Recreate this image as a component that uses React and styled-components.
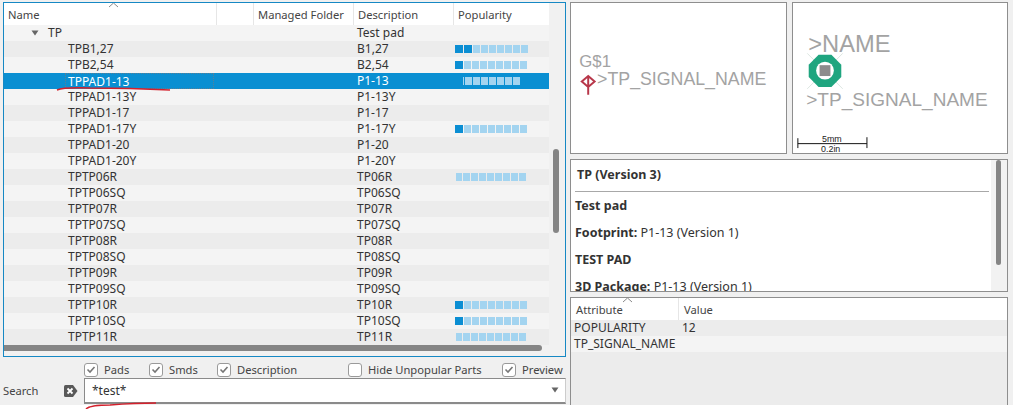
import React from "react"
import styled, { createGlobalStyle } from "styled-components"

const Global = createGlobalStyle`
  html, body { margin: 0; padding: 0; background: #fff; }
  body { font-family: "Noto Sans", Tahoma, sans-serif; font-size: 12px; color: #333; }
  * { box-sizing: border-box; }
`

const Window = styled.div`
  position: relative;
  width: 1013px;
  height: 409px;
  overflow: hidden;
`

const Layout = styled.div`
  display: grid;
  grid-template-columns: 570px 1fr;
  height: 405px;
  background: #f0f0f0;
  padding-top: 2px;
`

const LeftPane = styled.div`
  display: flex;
  flex-direction: column;
  padding: 0 4px 0 3px;
`

const RightPane = styled.div`
  display: flex;
  flex-direction: column;
  gap: 5px;
  padding-right: 5px;
`

const ListBox = styled.div`
  position: relative;
  height: 355px;
  flex: none;
  border: 1px solid #1688c4;
  overflow: hidden;
  background: #f1f1f1;
`

const HeaderRow = styled.div`
  display: grid;
  grid-template-columns: ${(p) => p.$columns};
  height: 22px;
  width: ${(p) => p.$width};
  background: #fff;
`

const HeaderCell = styled.div`
  position: relative;
  display: flex;
  align-items: center;
  padding-left: ${(p) => p.$pad || 4}px;
  border-right: 1px solid #e6e6e6;
  font-size: 11.2px;
  white-space: nowrap;
  color: #444;
  &:last-child { border-right: none; }
`

const SortArrow = styled.svg`
  position: absolute;
  top: -1px;
  left: ${(p) => p.$left}px;
`

const Row = styled.div`
  display: grid;
  grid-template-columns: 213px 37px 100px 100px 95px;
  width: 545px;
  height: 16px;
  align-items: center;
  white-space: nowrap;
  background: ${(p) => (p.$selected ? "#0a8fd2" : p.$odd ? "#ececec" : "#f4f4f4")};
  color: ${(p) => (p.$selected ? "#fff" : "#333")};
`

const NameCell = styled.div`
  height: 16px;
  line-height: 16px;
  padding-left: ${(p) => p.$indent}px;
  display: flex;
  align-items: center;
`

const FocusBox = styled.div`
  width: 100%;
  height: 16px;
  line-height: 15px;
  margin-left: -3px;
  border: ${(p) => (p.$focus ? "1px dotted #5a7f96" : "none")};
  padding-left: ${(p) => (p.$focus ? 2 : 3)}px;
`

const TreeArrow = styled.svg`
  margin-right: 9px;
  margin-left: -17px;
  flex: none;
`

const DescCell = styled.div`
  padding-left: 3px;
  line-height: 16px;
`

const Bar = styled.div`
  display: flex;
  gap: 1px;
  padding-left: ${(p) => p.$pad}px;
`

const BarCell = styled.div`
  width: ${(p) => p.$w}px;
  height: 8px;
  background: ${(p) => (p.$on ? "#0b8ed3" : "#a3d4f0")};
`

const VScroll = styled.div`
  position: absolute;
  right: 6px;
  top: ${(p) => p.$top}px;
  width: ${(p) => p.$w || 6}px;
  height: ${(p) => p.$h}px;
  border-radius: 3px;
  background: #858585;
`

const HScroll = styled.div`
  position: absolute;
  left: 0;
  bottom: 5px;
  width: 538px;
  height: 6px;
  border-radius: 0 3px 3px 0;
  background: #858585;
`

const OptionsRow = styled.div`
  display: flex;
  align-items: center;
  height: 21px;
  padding: 4px 0 0 81px;
  white-space: nowrap;
  flex: none;
`

const Check = styled.label`
  display: flex;
  align-items: center;
  gap: 6px;
  width: ${(p) => p.$w}px;
  flex: none;
  font-size: 11.2px;
  color: #444;
`

const Box = styled.span`
  width: 14px;
  height: 14px;
  flex: none;
  border: 1px solid #9a9a9a;
  border-radius: 3px;
  background: #fff;
  display: flex;
  align-items: center;
  justify-content: center;
`

const SearchRow = styled.div`
  display: flex;
  align-items: center;
  height: 25px;
  flex: none;
`

const SearchLabel = styled.span`
  width: 60px;
  font-size: 11.2px;
  color: #444;
`

const ClearIcon = styled.svg`
  margin-right: 6px;
  flex: none;
`

const SearchInput = styled.div`
  flex: 1;
  height: 26px;
  border: 1px solid #8a8a8a;
  border-width: 1px 0 2px 1px;
  border-right: 1px solid #ccc;
  background: #fff;
  display: flex;
  align-items: center;
  justify-content: space-between;
  padding: 0 6px 0 7px;
  color: #333;
`

const Caret = styled.svg`
  flex: none;
`

const Previews = styled.div`
  display: grid;
  grid-template-columns: 217px 216px;
  gap: 5px;
  height: 152px;
  flex: none;
`

const Canvas = styled.svg`
  display: block;
  width: 100%;
  height: 100%;
  border: 1px solid #8e8e8e;
  background: #fff;
`

const PreviewText = styled.text`
  font-family: "Liberation Sans", Arial, sans-serif;
  fill: ${(p) => p.$fill || "#a3a3a3"};
  font-size: ${(p) => p.$size}px;
`

const InfoPanel = styled.div`
  position: relative;
  height: 133px;
  flex: none;
  border: 1px solid #8e8e8e;
  background: #fff;
  overflow: hidden;
  padding: 7px 0 0 4px;
  font-size: 12.5px;
  color: #333;
`

const InfoTitle = styled.div`
  font-weight: bold;
  padding: 0 0 9px 2px;
  line-height: 15px;
  margin-right: 18px;
  border-bottom: 1px solid #a8a8a8;
`

const InfoLine = styled.p`
  margin: 0;
  height: 27px;
  line-height: 27px;
  white-space: nowrap;
`

const InfoBold = styled.b`
  font-weight: bold;
`

const InfoTrack = styled.div`
  position: absolute;
  top: 0;
  right: 0;
  bottom: 0;
  width: 16px;
  background: #f2f2f2;
`

const AttrPanel = styled.div`
  flex: 1;
  border: 1px solid #8e8e8e;
  border-bottom: none;
  background: #ececec;
`

const AttrRow = styled.div`
  display: grid;
  grid-template-columns: 108px 1fr;
  height: 16px;
  line-height: 16px;
  padding-left: 3px;
  white-space: nowrap;
  background: ${(p) => (p.$odd ? "#ececec" : "#f4f4f4")};
`

const Marks = styled.svg`
  position: absolute;
  left: 0;
  top: 0;
  pointer-events: none;
`

const COLS = "213px 37px 100px 100px 95px"

const rows = [
  { name: "TPB1,27", desc: "B1,27", on: 2 },
  { name: "TPB2,54", desc: "B2,54", on: 1 },
  { name: "TPPAD1-13", desc: "P1-13", on: 0, selected: true },
  { name: "TPPAD1-13Y", desc: "P1-13Y" },
  { name: "TPPAD1-17", desc: "P1-17" },
  { name: "TPPAD1-17Y", desc: "P1-17Y", on: 1 },
  { name: "TPPAD1-20", desc: "P1-20" },
  { name: "TPPAD1-20Y", desc: "P1-20Y" },
  { name: "TPTP06R", desc: "TP06R", on: 0 },
  { name: "TPTP06SQ", desc: "TP06SQ" },
  { name: "TPTP07R", desc: "TP07R" },
  { name: "TPTP07SQ", desc: "TP07SQ" },
  { name: "TPTP08R", desc: "TP08R" },
  { name: "TPTP08SQ", desc: "TP08SQ" },
  { name: "TPTP09R", desc: "TP09R" },
  { name: "TPTP09SQ", desc: "TP09SQ" },
  { name: "TPTP10R", desc: "TP10R", on: 1 },
  { name: "TPTP10SQ", desc: "TP10SQ", on: 1 },
  { name: "TPTP11R", desc: "TP11R", on: 0 },
]

const Popularity = ({ on, selected }) => {
  const firstWidth = selected ? 1 : on === 0 ? 6 : 8
  return (
    <Bar $pad={selected ? 9 : on === 0 ? 2 : 1}>
      {Array.from({ length: selected ? 8 : 9 }).map((_, i) => (
        <BarCell key={i} $on={i < on} $w={i === 0 ? firstWidth : i < on ? 8 : 7} />
      ))}
    </Bar>
  )
}

const Arrow = ({ left }) => (
  <SortArrow $left={left} width="11" height="6" viewBox="0 0 11 6">
    <path d="M1 5 L5.5 1 L10 5" fill="none" stroke="#8a8a8a" strokeWidth="1" />
  </SortArrow>
)

const Tick = () => (
  <svg width="10" height="9" viewBox="0 0 10 9">
    <path d="M1.5 4.5 L4 7 L8.5 2" fill="none" stroke="#777" strokeWidth="1.6" />
  </svg>
)

const Option = ({ w, checked, children }) => (
  <Check $w={w}>
    <Box>{checked && <Tick />}</Box>
    {children}
  </Check>
)

const App = () => (
  <Window>
    <Global />
    <Layout>
      <LeftPane>
        <ListBox>
          <HeaderRow $columns={COLS} $width="545px">
            <HeaderCell>
              Name
              <Arrow left={104} />
            </HeaderCell>
            <HeaderCell />
            <HeaderCell>Managed Folder</HeaderCell>
            <HeaderCell>Description</HeaderCell>
            <HeaderCell>Popularity</HeaderCell>
          </HeaderRow>
          <Row $odd={false}>
            <NameCell $indent={44}>
              <TreeArrow width="8" height="6" viewBox="0 0 8 6">
                <path d="M0.5 0.5 H7.5 L4 5.5 Z" fill="#666" />
              </TreeArrow>
              TP
            </NameCell>
            <div />
            <div />
            <DescCell>Test pad</DescCell>
            <div />
          </Row>
          {rows.map((r, i) => (
            <Row key={r.name} $odd={i % 2 === 0} $selected={r.selected}>
              <NameCell $indent={64}>
                <FocusBox $focus={r.selected}>{r.name}</FocusBox>
              </NameCell>
              <div />
              <div />
              <DescCell>{r.desc}</DescCell>
              <div>{r.on !== undefined && <Popularity on={r.on} selected={r.selected} />}</div>
            </Row>
          ))}
          <VScroll $top={146} $h={84} />
          <HScroll />
        </ListBox>
        <OptionsRow>
          <Option w={65} checked>Pads</Option>
          <Option w={68} checked>Smds</Option>
          <Option w={131} checked>Description</Option>
          <Option w={154}>Hide Unpopular Parts</Option>
          <Option w={64} checked>Preview</Option>
        </OptionsRow>
        <SearchRow>
          <SearchLabel>Search</SearchLabel>
          <ClearIcon width="15" height="14" viewBox="0 0 15 14">
            <path d="M2.5 1 H10 L14.5 7 L10 13 H2.5 Q1 13 1 11.5 V2.5 Q1 1 2.5 1 Z" fill="#595959" />
            <path d="M4.5 4.5 L9.5 9.5 M9.5 4.5 L4.5 9.5" stroke="#fff" strokeWidth="1.8" />
          </ClearIcon>
          <SearchInput>
            *test*
            <Caret width="8" height="6" viewBox="0 0 8 6">
              <path d="M0.5 0.5 H7.5 L4 5.5 Z" fill="#666" />
            </Caret>
          </SearchInput>
        </SearchRow>
      </LeftPane>
      <RightPane>
        <Previews>
          <Canvas viewBox="0 0 217 152">
            <PreviewText x="8" y="65" $size={17}>G$1</PreviewText>
            <PreviewText x="26" y="83" $size={18}>&gt;TP_SIGNAL_NAME</PreviewText>
            <path
              d="M17 74 L23.5 79.5 L17 85 L10.5 79.5 Z M17 74 V93"
              fill="none"
              stroke="#b8374a"
              strokeWidth="2"
            />
          </Canvas>
          <Canvas viewBox="0 0 216 152">
            <PreviewText x="15" y="50" $size={24}>&gt;NAME</PreviewText>
            <path d="M14 51 L50 87 M50 51 L14 87" stroke="#dbe6e1" strokeWidth="1" />
            <path
              d="M25.5 52.5 H38.5 L48.5 62.5 V75 L38.5 85 H25.5 L15.5 75 V62.5 Z"
              fill="#1fa57f"
            />
            <circle cx="32" cy="68.500" r="9" fill="#fff" />
            <rect x="26.500" y="63" width="11" height="11" fill="#8c8c8c" />
            <PreviewText x="13" y="104" $size={19.300}>&gt;TP_SIGNAL_NAME</PreviewText>
            <path d="M4.500 137 V147 M74.500 136 V147 M4.500 142.500 H74.500" stroke="#111" strokeWidth="1" fill="none" />
            <PreviewText x="29" y="141" $size={9} $fill="#222">5mm</PreviewText>
            <PreviewText x="28" y="151" $size={9} $fill="#222">0.2in</PreviewText>
          </Canvas>
        </Previews>
        <InfoPanel>
          <InfoTitle>TP (Version 3)</InfoTitle>
          <InfoLine><InfoBold>Test pad</InfoBold></InfoLine>
          <InfoLine><InfoBold>Footprint:</InfoBold> P1-13 (Version 1)</InfoLine>
          <InfoLine><InfoBold>TEST PAD</InfoBold></InfoLine>
          <InfoLine><InfoBold>3D Package:</InfoBold> P1-13 (Version 1)</InfoLine>
          <InfoTrack />
          <VScroll $top={0} $h={105} $w={5} />
        </InfoPanel>
        <AttrPanel>
          <HeaderRow $columns="108px 1fr" $width="100%">
            <HeaderCell $pad={5}>
              Attribute
              <Arrow left={51} />
            </HeaderCell>
            <HeaderCell $pad={5}>Value</HeaderCell>
          </HeaderRow>
          <AttrRow $odd>
            <span>POPULARITY</span>
            <span>12</span>
          </AttrRow>
          <AttrRow>
            <span>TP_SIGNAL_NAME</span>
            <span />
          </AttrRow>
        </AttrPanel>
      </RightPane>
    </Layout>
    <Marks width="1013" height="409" viewBox="0 0 1013 409">
      <path d="M57 90 Q64 87 90 88 Q130 88 170 90" fill="none" stroke="#d4202c" strokeWidth="1.500" />
      <path d="M86 409 Q90 405 110 405 Q135 403 156 403" fill="none" stroke="#d4202c" strokeWidth="1.500" />
    </Marks>
  </Window>
)

export default App
